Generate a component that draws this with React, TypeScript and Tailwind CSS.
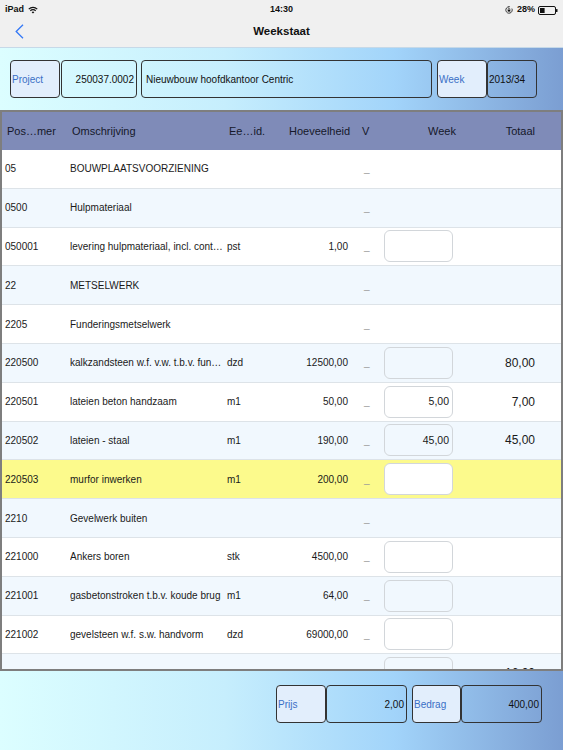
import React from "react";

type Row = {
  pos: string;
  desc: string;
  unit?: string;
  qty?: string;
  week?: string;
  box?: boolean;
  total?: string;
  bg: string;
  boxBg?: string;
};

const rows: Row[] = [
  { pos: "05", desc: "BOUWPLAATSVOORZIENING", bg: "bg-white" },
  { pos: "0500", desc: "Hulpmateriaal", bg: "bg-[#f1f8fe]" },
  { pos: "050001", desc: "levering hulpmateriaal, incl. cont…", unit: "pst", qty: "1,00", box: true, bg: "bg-white" },
  { pos: "22", desc: "METSELWERK", bg: "bg-[#f1f8fe]" },
  { pos: "2205", desc: "Funderingsmetselwerk", bg: "bg-white" },
  { pos: "220500", desc: "kalkzandsteen w.f. v.w. t.b.v. fun…", unit: "dzd", qty: "12500,00", box: true, total: "80,00", bg: "bg-[#f1f8fe]" },
  { pos: "220501", desc: "lateien beton handzaam", unit: "m1", qty: "50,00", box: true, week: "5,00", total: "7,00", bg: "bg-white" },
  { pos: "220502", desc: "lateien - staal", unit: "m1", qty: "190,00", box: true, week: "45,00", total: "45,00", bg: "bg-[#f1f8fe]" },
  { pos: "220503", desc: "murfor inwerken", unit: "m1", qty: "200,00", box: true, bg: "bg-[#fcfa8c]", boxBg: "bg-white" },
  { pos: "2210", desc: "Gevelwerk buiten", bg: "bg-[#f1f8fe]" },
  { pos: "221000", desc: "Ankers boren", unit: "stk", qty: "4500,00", box: true, bg: "bg-white" },
  { pos: "221001", desc: "gasbetonstroken t.b.v. koude brug", unit: "m1", qty: "64,00", box: true, bg: "bg-[#f1f8fe]" },
  { pos: "221002", desc: "gevelsteen w.f. s.w. handvorm", unit: "dzd", qty: "69000,00", box: true, bg: "bg-white" },
  { pos: "221003", desc: "gevelsteen w.f. s.w. machinaal", unit: "dzd", qty: "24000,00", box: true, total: "16,00", bg: "bg-[#f1f8fe]" },
];

function Wifi() {
  return (
    <svg width="10" height="8" viewBox="0 0 12 9" className="ml-[4px]">
      <path d="M0.9 3.4a7.2 7.2 0 0 1 10.2 0" stroke="#111" strokeWidth="1.4" fill="none" />
      <path d="M2.8 5.4a4.5 4.5 0 0 1 6.4 0" stroke="#111" strokeWidth="1.4" fill="none" />
      <path d="M6 8.8 L4.4 7.1a2.3 2.3 0 0 1 3.2 0 Z" fill="#111" />
    </svg>
  );
}

function OrientationLock() {
  return (
    <svg width="8" height="8" viewBox="0 0 10 10" className="mr-[4px]">
      <path d="M8.6 3.2A4 4 0 1 1 5 1" stroke="#111" strokeWidth="1" fill="none" />
      <path d="M4.6 0 L6.4 1 L4.6 2 Z" fill="#111" />
      <rect x="3.4" y="4.6" width="3.2" height="2.4" fill="#111" />
      <path d="M3.9 4.7V3.9a1.1 1.1 0 0 1 2.2 0v0.8" stroke="#111" strokeWidth="0.7" fill="none" />
    </svg>
  );
}

function Battery() {
  return (
    <svg width="20" height="9" viewBox="0 0 20 9" className="ml-[3px]">
      <rect x="0.5" y="0.5" width="17" height="8" rx="1.5" stroke="#111" strokeWidth="1" fill="none" />
      <rect x="2" y="2" width="4.6" height="5" fill="#111" />
      <rect x="18" y="3" width="1.5" height="3" rx="0.5" fill="#111" />
    </svg>
  );
}

function Field({
  w,
  label,
  children,
  align = "left",
}: {
  w: string;
  label?: boolean;
  children: React.ReactNode;
  align?: "left" | "right";
}) {
  return (
    <div
      className={`${w} h-[38px] flex items-center rounded-[4px] border border-[#333333] text-[10px] ${
        label ? "bg-[#e2eefc] text-[#3a6fc6]" : "text-[#111111]"
      } ${align === "right" ? "justify-end pr-[2px]" : "pl-[1px]"}`}
    >
      {children}
    </div>
  );
}

export default function App() {
  return (
    <div className="w-[563px] h-[750px] overflow-hidden flex flex-col font-['Liberation_Sans',Arial,sans-serif] text-[#111]">
      {/* status + nav */}
      <div className="bg-[#f0f0f0] border-b border-[#c6d9e8]">
        <div className="h-[20px] grid grid-cols-[1fr_auto_1fr] items-center text-[9px] font-semibold px-[5px]">
          <div className="flex items-center">
            <span>iPad</span>
            <Wifi />
          </div>
          <div>14:30</div>
          <div className="flex items-center justify-end">
            <OrientationLock />
            <span>28%</span>
            <Battery />
          </div>
        </div>
        <div className="h-[27px] pb-[4px] grid grid-cols-[1fr_auto_1fr] items-center">
          <div className="pl-[15px] flex items-center">
            <svg width="9" height="15" viewBox="0 0 9 15">
              <path d="M8 0.8 L1.2 7.5 L8 14.2" stroke="#3478f6" strokeWidth="1.3" fill="none" />
            </svg>
          </div>
          <div className="text-[11.5px] font-bold">Weekstaat</div>
          <div />
        </div>
      </div>

      {/* main */}
      <div className="flex-1 flex flex-col bg-[linear-gradient(to_right,#dcfeff_0%,#c6eefd_40%,#a2d4fa_70%,#7b9ed2_100%)]">
        <div className="mt-[12px] pl-[10px] flex">
          <Field w="w-[50px]" label>Project</Field>
          <div className="ml-[1px]">
            <Field w="w-[76px]" align="right">250037.0002</Field>
          </div>
          <div className="ml-[4px]">
            <div className="w-[291px] h-[38px] flex items-center rounded-[4px] border border-[#333333] text-[10px] pl-[4px]">
              Nieuwbouw hoofdkantoor Centric
            </div>
          </div>
          <div className="ml-[5px]">
            <Field w="w-[50px]" label>Week</Field>
          </div>
          <Field w="w-[50px]">2013/34</Field>
        </div>

        {/* table */}
        <div className="mt-[12px] h-[561px] border-2 border-[#7e7e7e] bg-white overflow-hidden flex flex-col">
          <div className="h-[38px] shrink-0 bg-[#7f8bb8] flex items-center pl-[5px] text-[11px] text-[#15182a]">
            <div className="w-[65px]">Pos…mer</div>
            <div className="w-[157px]">Omschrijving</div>
            <div className="w-[60px]">Ee…id.</div>
            <div className="w-[60px] text-right">Hoeveelheid</div>
            <div className="w-[36px] pl-[13px]">V</div>
            <div className="w-[69px] pl-[43px]">Week</div>
            <div className="w-[81px] text-right">Totaal</div>
          </div>
          <div className="flex-1 overflow-hidden">
            {rows.map((r) => (
              <div
                key={r.pos}
                className={`h-[38.8px] ${r.bg} border-b border-[#dde3e8] flex items-center pl-[3px] text-[10px] text-[#1a1a1a] whitespace-nowrap`}
              >
                <div className="w-[65px]">{r.pos}</div>
                <div className="w-[157px] overflow-hidden">{r.desc}</div>
                <div className="w-[60px]">{r.unit ?? ""}</div>
                <div className="w-[61px] text-right">{r.qty ?? ""}</div>
                <div className="w-[36px] pl-[16px] text-[#9a9a9a]">_</div>
                <div className="w-[69px]">
                  {r.box && (
                    <div
                      className={`w-[69px] h-[32px] rounded-[6px] border border-[#d2d6da] ${
                        r.boxBg ?? ""
                      } flex items-center justify-end pr-[3px] text-[10.5px]`}
                    >
                      {r.week ?? ""}
                    </div>
                  )}
                </div>
                <div className="w-[82px] text-right text-[12px]">{r.total ?? ""}</div>
              </div>
            ))}
          </div>
        </div>

        {/* bottom fields */}
        <div className="mt-[14px] pr-[21px] flex justify-end">
          <Field w="w-[50px]" label>Prijs</Field>
          <Field w="w-[81px]" align="right">2,00</Field>
          <div className="ml-[5px]">
            <Field w="w-[49px]" label>Bedrag</Field>
          </div>
          <Field w="w-[81px]" align="right">400,00</Field>
        </div>
      </div>
    </div>
  );
}
